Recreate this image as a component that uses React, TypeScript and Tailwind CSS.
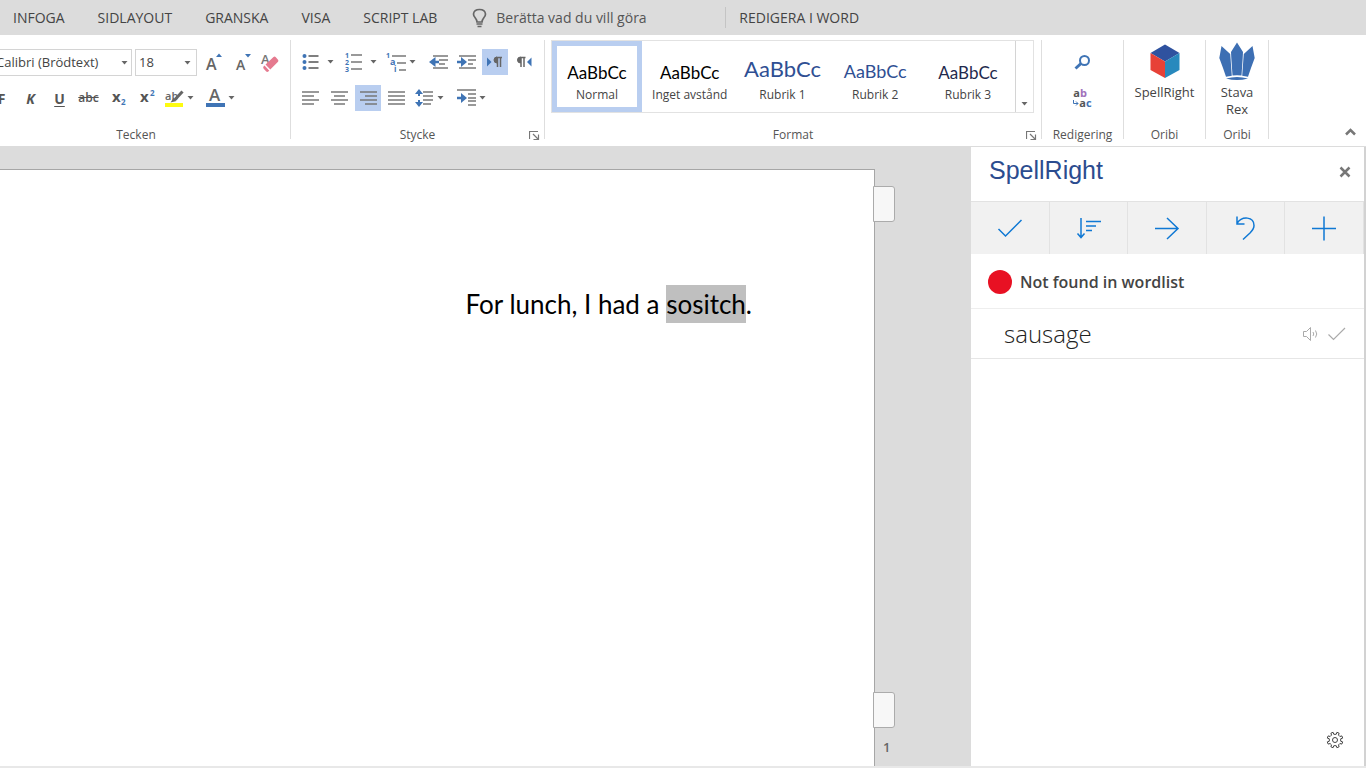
import type { ReactNode } from "react";
import clsx from "clsx";

const tabs = ["INFOGA", "SIDLAYOUT", "GRANSKA", "VISA", "SCRIPT LAB"];

const styles = [
  { name: "Normal", sample: "text-[17px] leading-7 text-black", active: true },
  { name: "Inget avstånd", sample: "text-[17px] leading-7 text-black" },
  { name: "Rubrik 1", sample: "text-[22px] leading-9 text-[#2f4f93]" },
  { name: "Rubrik 2", sample: "text-[18px] leading-8 text-[#2f4f93]" },
  { name: "Rubrik 3", sample: "text-[17px] leading-7 text-[#1f2a4d]" },
];

const Caret = () => (
  <svg width="7" height="4" viewBox="0 0 7 4" className="shrink-0">
    <path d="M.5 0h6L3.5 3.5z" fill="#666" />
  </svg>
);

const Lines = ({ rows }: { rows: number[][] }) => (
  <>
    {rows.map(([x1, x2, y]) => (
      <path key={y} d={`M${x1} ${y}H${x2}`} stroke="#777" strokeWidth="1.5" />
    ))}
  </>
);

type ToolProps = {
  label: string;
  className?: string;
  active?: boolean;
  caret?: boolean;
  children: ReactNode;
};

const Tool = ({ label, className, active, caret, children }: ToolProps) => (
  <button
    type="button"
    aria-label={label}
    title={label}
    className={clsx(
      "flex h-[26px] shrink-0 items-center text-[#555] [&_svg]:overflow-visible",
      caret ? "justify-start" : "justify-center",
      active && "bg-[#b9cef0]",
      className
    )}
  >
    {children}
    {caret && <Caret />}
  </button>
);

type GroupProps = {
  title: string;
  className?: string;
  launcher?: boolean;
  children: ReactNode;
};

const Group = ({ title, className, launcher, children }: GroupProps) => (
  <section
    className={clsx(
      "relative flex h-[99px] shrink-0 flex-col border-r border-[#dedede]",
      className
    )}
  >
    {children}
    <h2 className="mt-auto text-center text-[12px] leading-2 text-[#555]">
      {title}
    </h2>
    {launcher && (
      <button
        type="button"
        aria-label={`${title}: fler alternativ`}
        className="absolute right-1 -bottom-[2px]"
      >
        <svg width="11" height="11" viewBox="0 0 11 11" fill="none" stroke="#777">
          <path d="M.5 9V1.500H9M4 4l5 5M9.500 4.500v5h-5" strokeWidth="1.200" />
        </svg>
      </button>
    )}
  </section>
);

const FontGroup = () => (
  <Group title="Tecken" className="-ml-[18px] w-[309px]">
    <div className="mt-[9px] flex items-center">
      <div className="relative">
        <select
          aria-label="Teckensnitt"
          className="h-[27px] w-[150px] appearance-none border border-[#d4d4d4] bg-white pl-[13px] text-[13px] text-[#444]"
        >
          <option>Calibri (Brödtext)</option>
        </select>
        <span className="pointer-events-none absolute top-3 right-1">
          <Caret />
        </span>
      </div>
      <div className="relative ml-[3px]">
        <select
          aria-label="Teckenstorlek"
          className="h-[27px] w-[62px] appearance-none border border-[#d4d4d4] bg-white pl-[3px] text-[13px] text-[#444]"
        >
          <option>18</option>
        </select>
        <span className="pointer-events-none absolute top-3 right-[6px]">
          <Caret />
        </span>
      </div>
      <Tool label="Öka teckenstorlek" className="ml-[3px] w-7">
        <svg width="20" height="20" viewBox="0 0 20 20">
          <text x="2" y="17" fontSize="16" fontWeight="600" fill="#666">A</text>
          <path d="M12 4l3-3.500L18 4z" fill="#3f74b5" />
        </svg>
      </Tool>
      <Tool label="Minska teckenstorlek" className="w-7">
        <svg width="20" height="20" viewBox="0 0 20 20">
          <text x="4" y="17" fontSize="14" fontWeight="600" fill="#666">A</text>
          <path d="M13 1h6l-3 3.500z" fill="#3f74b5" />
        </svg>
      </Tool>
      <Tool label="Rensa formatering" className="w-7">
        <svg width="20" height="20" viewBox="0 0 20 20">
          <text x="1" y="11" fontSize="13" fontWeight="600" fill="#777">A</text>
          <path d="M5.500 11.500l8-7.500q1.200-1 2.300.2l2.200 2.600q1 1.200-.2 2.200l-7.500 7.500z" fill="#e57a8f" />
          <path d="M4.500 12.500l4.800 5.200-1 .8q-1.300.9-2.300-.3L3.500 15.500q-.8-1.200.2-2.200z" fill="#e57a8f" />
        </svg>
      </Tool>
    </div>
    <div className="mt-[9px] flex items-center pl-[5px] text-[14px] font-bold">
      <Tool label="Fet" className="w-[29px]">F</Tool>
      <Tool label="Kursiv" className="w-[29px] italic">K</Tool>
      <Tool label="Understruken" className="w-[29px] underline underline-offset-2">
        U
      </Tool>
      <Tool label="Genomstruken" className="w-[29px] text-[12px] font-semibold line-through">
        abc
      </Tool>
      <Tool label="Nedsänkt" className="w-[29px]">
        <svg width="18" height="20" viewBox="0 0 18 20">
          <text x="3" y="14" fontSize="15" fill="#555">x</text>
          <text x="12" y="17" fontSize="8" fill="#3f74b5">2</text>
        </svg>
      </Tool>
      <Tool label="Upphöjd" className="w-[29px]">
        <svg width="18" height="20" viewBox="0 0 18 20">
          <text x="2" y="14" fontSize="15" fill="#555">x</text>
          <text x="12" y="8" fontSize="8" fill="#3f74b5">2</text>
        </svg>
      </Tool>
      <Tool label="Färgöverstrykning" caret className="ml-[3px] w-10">
        <svg width="23" height="20" viewBox="0 0 23 20">
          <path d="M1 15h18v4H1z" fill="#fdfb10" />
          <text x="1" y="12" fontSize="11" fontWeight="600" fill="#666">ab</text>
          <path d="M18.500 3.500L11 11.500" stroke="#666" strokeWidth="3" />
          <path d="M9.500 10l3 3-6 1.500z" fill="#666" />
        </svg>
      </Tool>
      <Tool label="Teckenfärg" caret className="w-9">
        <svg width="24" height="20" viewBox="0 0 24 20">
          <path d="M2 15h19v4H2z" fill="#3f74b5" />
          <text x="5" y="13" fontSize="17" fontWeight="600" fill="#666">A</text>
        </svg>
      </Tool>
    </div>
  </Group>
);

const ParagraphGroup = () => (
  <Group title="Stycke" launcher className="w-[254px]">
    <div className="mt-[9px] flex items-center pl-[9px]">
      <Tool label="Punktlista" caret className="w-[43px]">
        <svg width="27" height="20" viewBox="0 0 27 20">
          {[4, 10, 16].map((y) => (
            <circle key={y} cx="4.500" cy={y} r="2" fill="#3f74b5" />
          ))}
          <path d="M8.500 4h10M8.500 10h10M8.500 16h10" stroke="#555" strokeWidth="1.700" />
        </svg>
      </Tool>
      <Tool label="Numrerad lista" caret className="w-[43px]">
        <svg width="27" height="20" viewBox="0 0 27 20">
          <g fontSize="7" fontWeight="700" fill="#3f74b5">
            <text x="2" y="6">1</text>
            <text x="2" y="13">2</text>
            <text x="2" y="20">3</text>
          </g>
          <Lines rows={[[8, 19, 3], [8, 19, 10], [8, 19, 17]]} />
        </svg>
      </Tool>
      <Tool label="Flernivålista" caret className="w-[39px]">
        <svg width="23" height="20" viewBox="0 0 23 20">
          <g fontWeight="700" fill="#3f74b5">
            <text x="0" y="6" fontSize="7">1</text>
            <text x="4" y="13" fontSize="9">a</text>
            <text x="8" y="20" fontSize="8">i</text>
          </g>
          <Lines rows={[[6, 20, 4], [11, 20, 11], [13, 20, 18]]} />
        </svg>
      </Tool>
      <Tool label="Minska indrag" className="w-7">
        <svg width="20" height="16" viewBox="0 0 20 16">
          <Lines rows={[[4, 19, 2], [10, 19, 6], [10, 16, 10], [4, 19, 14]]} />
          <path d="M10 8H4" stroke="#3f74b5" strokeWidth="2.500" />
          <path d="M6.500 3v10L0 8z" fill="#3f74b5" />
        </svg>
      </Tool>
      <Tool label="Öka indrag" className="w-7">
        <svg width="20" height="16" viewBox="0 0 20 16">
          <Lines rows={[[2, 19, 2], [11, 19, 6], [11, 16, 10], [2, 19, 14]]} />
          <path d="M0 8h6" stroke="#3f74b5" strokeWidth="2.500" />
          <path d="M4 3v10l6-5z" fill="#3f74b5" />
        </svg>
      </Tool>
      <Tool label="Vänster till höger" active className="ml-[1px] w-[26px]">
        <svg width="18" height="12" viewBox="0 0 18 12">
          <path d="M1 1.500v9L5.500 6z" fill="#3f74b5" />
          <path d="M10 1.500h6M11.500 1v10M14.500 1v10" stroke="#666" strokeWidth="1.500" />
          <path d="M11 1a3 3 0 000 6z" fill="#666" stroke="#666" />
        </svg>
      </Tool>
      <Tool label="Höger till vänster" className="w-8">
        <svg width="18" height="12" viewBox="0 0 18 12">
          <path d="M16.500 1.500v9L12 6z" fill="#3f74b5" />
          <path d="M5 1.500h5.500M6 1v10M9 1v10" stroke="#666" strokeWidth="1.500" />
          <path d="M5.500 1a3 3 0 000 6z" fill="#666" stroke="#666" />
        </svg>
      </Tool>
    </div>
    <div className="mt-[10px] flex items-center gap-[3px] pl-[6px]">
      <Tool label="Vänsterjustera" className="w-[26px]">
        <svg width="18" height="14" viewBox="0 0 18 14">
          <Lines rows={[[1, 18, 1], [1, 13, 5], [1, 18, 9], [1, 13, 13]]} />
        </svg>
      </Tool>
      <Tool label="Centrera" className="w-[26px]">
        <svg width="18" height="14" viewBox="0 0 18 14">
          <Lines rows={[[1, 18, 1], [4, 15, 5], [1, 18, 9], [4, 15, 13]]} />
        </svg>
      </Tool>
      <Tool label="Högerjustera" active className="w-[26px]">
        <svg width="18" height="14" viewBox="0 0 18 14">
          <Lines rows={[[1, 18, 1], [6, 18, 5], [1, 18, 9], [6, 18, 13]]} />
        </svg>
      </Tool>
      <Tool label="Marginaljustera" className="w-[26px]">
        <svg width="18" height="14" viewBox="0 0 18 14">
          <Lines rows={[[0, 17, 1], [0, 17, 5], [0, 17, 9], [0, 17, 13]]} />
        </svg>
      </Tool>
      <Tool label="Radavstånd" caret className="ml-[2px] w-[38px]">
        <svg width="22" height="20" viewBox="0 0 22 20">
          <Lines rows={[[8, 18, 4], [8, 18, 8], [8, 18, 12], [8, 16, 16]]} />
          <path d="M4 3v5M4 12v5" stroke="#3f74b5" strokeWidth="2" />
          <path d="M0 6l4-5 4 5zM0 14l4 5 4-5z" fill="#3f74b5" />
        </svg>
      </Tool>
      <Tool label="Specialindrag" caret className="w-[39px]">
        <svg width="23" height="20" viewBox="0 0 23 20">
          <Lines rows={[[1, 20, 2], [12, 20, 6], [12, 20, 10], [12, 20, 13], [12, 20, 17]]} />
          <path d="M1 10h5" stroke="#3f74b5" strokeWidth="2.500" />
          <path d="M5 5v10l6-5z" fill="#3f74b5" />
        </svg>
      </Tool>
    </div>
  </Group>
);

const StylesGroup = () => (
  <Group title="Format" launcher className="w-[497px]">
    <div className="ml-[6px] flex h-[73px] w-[483px] border border-[#e2e2e2]">
      <div className="flex flex-1 justify-between pr-[2px]">
        {styles.map(({ name, sample, active }) => (
          <button
            type="button"
            key={name}
            className={clsx(
              "flex w-[90px] flex-col items-center justify-end border-5 pb-1 whitespace-nowrap",
              active ? "border-[#b9cef0]" : "border-transparent"
            )}
          >
            <span className={clsx("font-['Lato',sans-serif]", sample)}>
              AaBbCc
            </span>
            <span className="text-[12px] leading-4 text-[#444]">{name}</span>
          </button>
        ))}
      </div>
      <button
        type="button"
        aria-label="Fler format"
        className="flex w-[18px] items-end justify-center border-l border-[#d4d4d4] pb-[6px]"
      >
        <Caret />
      </button>
    </div>
  </Group>
);

const Ribbon = () => (
  <div className="flex h-28 overflow-hidden border-b border-[#dcdcdc] bg-white pt-[5px]">
    <FontGroup />
    <ParagraphGroup />
    <StylesGroup />
    <Group title="Redigering" className="w-[82px] items-center">
      <Tool label="Sök" className="mt-[9px] w-8">
        <svg width="18" height="16" viewBox="0 0 18 16" fill="none" stroke="#3f74b5">
          <circle cx="10.500" cy="6.500" r="4.500" strokeWidth="2" />
          <path d="M7 9.500L1.500 14.500" strokeWidth="3" />
        </svg>
      </Tool>
      <Tool label="Ersätt" className="mt-[10px] w-8">
        <span className="flex flex-col text-[11px] leading-[10px] font-bold">
          <span className="flex">
            a<span className="text-[#a172bb]">b</span>
          </span>
          <span className="flex items-center">
            <svg width="6" height="7" viewBox="0 0 6 7" fill="none" stroke="#3f74b5">
              <path d="M.5 0v3.500H5M3 1.500l2 2-2 2" />
            </svg>
            a<span className="text-[#3f74b5]">c</span>
          </span>
        </span>
      </Tool>
    </Group>
    <Group title="Oribi" className="w-[82px]">
      <button type="button" className="flex flex-col items-center pt-1">
        <svg width="30" height="36" viewBox="0 0 30 36">
          <path d="M15 .5l14.500 8.500L15 17.500.5 9z" fill="#2f529f" />
          <path d="M.5 9L15 17.500V34L.5 26z" fill="#e74137" />
          <path d="M29.500 9L15 17.500V34l14.500-8z" fill="#2889bd" />
        </svg>
        <span className="mt-1 text-[13px] leading-[17px] text-[#444]">SpellRight</span>
      </button>
    </Group>
    <Group title="Oribi" className="w-[63px]">
      <button type="button" className="flex flex-col items-center pt-[2px]">
        <svg width="36" height="38" viewBox="0 0 36 38" fill="#3d6fb3">
          <path d="M18 .5l6 9.500-.3 6-1.200 17.500q-4.500-.6-9 0L12.300 16 12 10z" />
          <path d="M2.500 4l8.700 8 .4 5 1.200 16.800-5.800 1L4 26 .3 16z" />
          <path d="M33.500 4l-8.700 8-.4 5-1.200 16.800 5.800 1L32 26l3.700-10z" />
          <path d="M7 36.400q11-3 22 0-11 3-22 0z" />
        </svg>
        <span className="mt-1 w-10 text-[13px] leading-[17px] text-[#444]">
          Stava Rex
        </span>
      </button>
    </Group>
    <div className="flex flex-1 items-end justify-end pr-[10px] pb-[10px]">
      <button type="button" aria-label="Dölj menyfliksområdet">
        <svg width="11" height="8" viewBox="0 0 11 8" fill="none">
          <path d="M1 6.500l4.500-4.500L10 6.500" stroke="#777" strokeWidth="2.500" />
        </svg>
      </button>
    </div>
  </div>
);

const Handle = ({ label }: { label: string }) => (
  <button
    type="button"
    aria-label={label}
    className="-ml-[2px] block h-9 w-[22px] rounded-r-[3px] border border-[#ababab] bg-[#f7f7f7]"
  />
);

const Document = () => (
  <main className="flex flex-1 bg-[#dcdcdc] pt-[22px]">
    <article className="flex-1 border-t border-r border-[#a6a6a6] bg-white pt-[115px] pr-[122px] text-right">
      <p className="font-['Lato',sans-serif] text-[26px] leading-[38px] text-black">
        For lunch, I had a <mark className="inline-block bg-[#bfbfbf] text-black">sositch</mark>.
      </p>
    </article>
    <div className="flex w-24 flex-col pt-[17px]">
      <Handle label="Sidhuvud" />
      <div className="mt-auto">
        <Handle label="Sidfot" />
        <p className="mt-[7px] mb-[7px] ml-2 text-[13px] leading-6 font-semibold text-[#666]">1</p>
      </div>
    </div>
  </main>
);

const paneTools = [
  { label: "Godkänn", d: "M6.500 17l7 7L29.500 8" },
  { label: "Sortera", d: "M11 6v19M7.500 21.500l3.500 4 3.500-4M16 9.500h15M16 14h10M16 18.500h6" },
  { label: "Nästa", d: "M6 16.500h23M18 6l11 10.500L18 27" },
  { label: "Ångra", d: "M9 4.500v7.500h7.500M9 11.500c5-8 17-7 17 2 0 3-1.500 5-4 7.500l-7 6.500" },
  { label: "Lägg till", d: "M18 4.500v24M6 16.500h24" },
];

const TaskPane = () => (
  <aside className="flex w-[395px] shrink-0 flex-col border-r-2 border-[#d2d2d2] bg-white">
    <header className="flex h-[54px] items-start justify-between pt-[7px] pr-[13px] pl-[18px]">
      <h1 className="font-['Liberation_Sans',sans-serif] text-[25px] leading-8 text-[#2b4c8f]">
        SpellRight
      </h1>
      <button type="button" aria-label="Stäng" className="mt-3">
        <svg width="12" height="12" viewBox="0 0 12 12">
          <path d="M1.500 1.500l9 9M10.500 1.500l-9 9" stroke="#777" strokeWidth="2.500" />
        </svg>
      </button>
    </header>
    <div className="flex h-[53px] border-t border-[#e2e2e2] bg-[#f1f1f1]">
      {paneTools.map(({ label, d }) => (
        <button
          type="button"
          key={label}
          aria-label={label}
          className="flex flex-1 items-center justify-center border-r border-[#e2e2e2]"
        >
          <svg width="36" height="33" viewBox="0 0 36 33" fill="none">
            <path d={d} stroke="#0f78d4" strokeWidth="1.500" />
          </svg>
        </button>
      ))}
    </div>
    <div className="flex h-[55px] items-center gap-2 border-b border-[#eee] pt-[2px] pl-[17px]">
      <span className="size-6 rounded-full bg-[#e81123]" />
      <p className="text-[16px] font-semibold text-[#444]">Not found in wordlist</p>
    </div>
    <div className="flex h-[50px] items-center border-b border-[#e6e6e6] pr-[18px] pl-[33px]">
      <p className="flex-1 text-[24px] leading-8 font-light text-[#222]">sausage</p>
      <button type="button" aria-label="Lyssna">
        <svg width="18" height="16" viewBox="0 0 18 16" fill="none" stroke="#aaa">
          <path d="M1.500 5.500v5h3l4 4v-13l-4 4zM11 6q1.500 2 0 4M13.500 4.500q2.500 3.500 0 7" />
        </svg>
      </button>
      <button type="button" aria-label="Använd ordet" className="ml-2">
        <svg width="18" height="14" viewBox="0 0 18 14" fill="none" stroke="#aaa">
          <path d="M.5 7.500l5 5L17 1" strokeWidth="1.200" />
        </svg>
      </button>
    </div>
    <button type="button" aria-label="Inställningar" className="mt-auto mr-5 mb-[17px] self-end">
      <svg width="18" height="18" viewBox="-9 -9 18 18" fill="none" stroke="#444">
        <path
          strokeLinejoin="round"
          d="M-1.200-5.700L-1.900-7.700L-4.100-6.800L-3.500-4.900L-4.900-3.500L-6.800-4.100L-7.700-1.900L-5.700-1.200V1.200L-7.700 1.900L-6.800 4.100L-4.900 3.500L-3.500 4.900L-4.100 6.800L-1.900 7.700L-1.200 5.700H1.200L1.900 7.700L4.100 6.800L3.500 4.900L4.900 3.500L6.800 4.100L7.700 1.900L5.700 1.200V-1.200L7.700-1.900L6.800-4.100L4.900-3.500L3.500-4.900L4.100-6.800L1.900-7.700L1.200-5.700z"
        />
        <circle r="2.500" />
      </svg>
    </button>
  </aside>
);

export default function App() {
  return (
    <div className="flex min-h-screen flex-col overflow-hidden border-b-2 border-[#e8e8e8] font-['Open_Sans',sans-serif]">
      <nav className="flex h-[35px] items-center gap-[33px] bg-[#dcdcdc] pl-[13px] text-[14px] whitespace-nowrap text-[#444]">
        {tabs.map((tab) => (
          <a key={tab} href="#">
            {tab}
          </a>
        ))}
        <label className="flex items-center gap-[9px] pl-[2px]">
          <svg width="15" height="20" viewBox="0 0 15 20" fill="none" stroke="#666">
            <path
              d="M5 14q0-2-2-4.500Q1.500 8 1.500 6q.5-4.500 6-4.500t6 4.500q0 2-1.500 3.500-2 2.500-2 4.500z"
              strokeWidth="1.700"
            />
            <path d="M4.500 16h6M5.500 18.500h4" strokeWidth="1.700" />
          </svg>
          <input
            aria-label="Berätta vad du vill göra"
            placeholder="Berätta vad du vill göra"
            className="w-[196px] bg-transparent placeholder:text-[#555]"
          />
        </label>
        <a href="#" className="border-l border-[#c4c4c4] pl-[13px]">
          REDIGERA I WORD
        </a>
      </nav>
      <Ribbon />
      <div className="flex flex-1">
        <Document />
        <TaskPane />
      </div>
    </div>
  );
}
